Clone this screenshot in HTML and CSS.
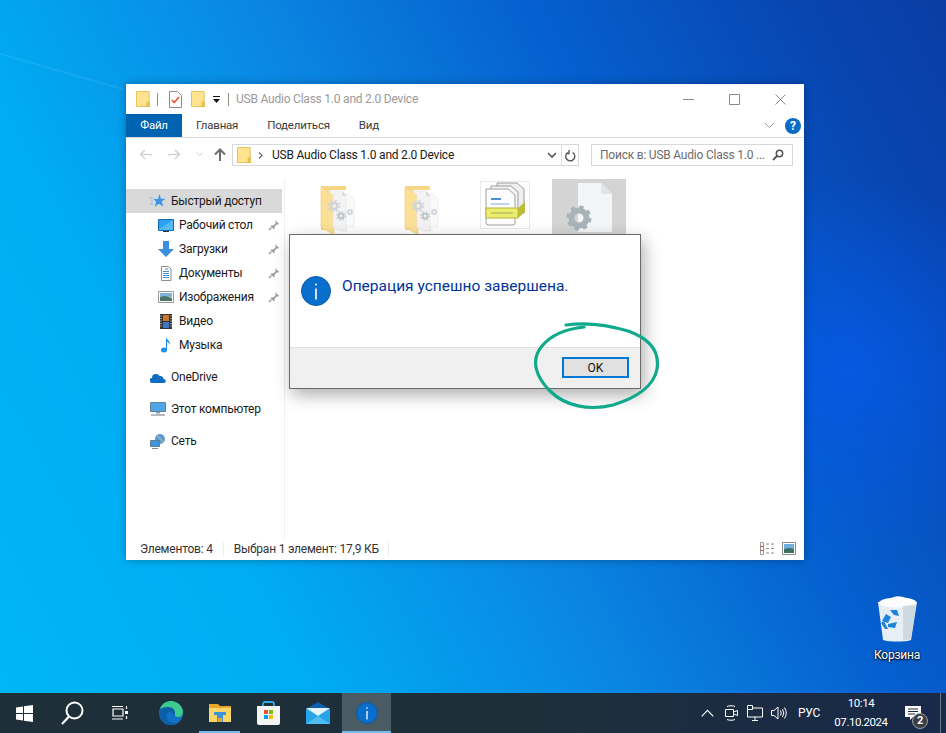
FILE: index.html
```html
<!DOCTYPE html>
<html lang="ru">
<head>
<meta charset="utf-8">
<title>USB Audio Class 1.0 and 2.0 Device</title>
<link rel="stylesheet" href="styles.css">
</head>
<body>
<svg class="defs" width="0" height="0">
  <symbol id="folder" viewBox="0 0 14 16">
    <path d="M.5.5h12.6v15H.5z" fill="#ffe38f" stroke="#e3c25f"/>
    <path d="M11 11h2.500v4.500H11z" fill="#f5c94e" stroke="#d9ad3b" stroke-width=".6"/>
  </symbol>
  <symbol id="pin" viewBox="0 0 12 12">
    <path d="M7 1l4 4-1 .6-1.200-.2L6.600 7.600l.2 1.800-1 .8-3-3 .8-1 1.800.2L7.600 4.200 7.400 2z" fill="#9a9a9a"/>
    <path d="M3.500 8.500L1 11" stroke="#9a9a9a" stroke-width="1.200"/>
  </symbol>
  <symbol id="folderdocs" viewBox="0 0 35 50">
    <path d="M1 0h25v4H10v40H1z" fill="#f6d685"/>
    <path d="M1 1l13 8v40L1 41z" fill="#fbdf95" stroke="#efcd74" stroke-width=".6"/>
    <path d="M8 5h14l5 5v35H19l-6-3.500V9z" fill="#f3f3f3" stroke="#e6e6e6" stroke-width=".6"/>
    <path d="M22 5l5 5h-5z" fill="#dcdcdc"/>
    <path d="M26 8h3l5 5v28h-8z" fill="#f9f9f9" stroke="#e6e6e6" stroke-width=".6"/>
    <circle cx="14" cy="20" r="3.300" fill="none" stroke="#cdd4da" stroke-width="2.600"/>
    <circle cx="14" cy="20" r="5.600" fill="none" stroke="#cdd4da" stroke-width="1.500" stroke-dasharray="2 2.400"/>
    <circle cx="21" cy="30" r="2.400" fill="none" stroke="#bcc5cc" stroke-width="2"/>
    <circle cx="21" cy="30" r="4.300" fill="none" stroke="#bcc5cc" stroke-width="1.200" stroke-dasharray="1.600 1.800"/>
    <circle cx="30" cy="26" r="2" fill="none" stroke="#d0d6db" stroke-width="1.800"/>
  </symbol>
</svg>

<div class="desktop">
  <main class="wallpaper">
    <div class="beam"></div>

    <section class="window">
      <header class="titlebar">
        <svg class="qat-icon" width="14" height="16"><use href="#folder"/></svg>
        <span class="qat-sep"></span>
        <svg class="qat-icon doc-icon" width="13" height="17" viewBox="0 0 13 17">
          <path d="M.5.5h8l4 4v12H.5z" fill="#fff" stroke="#8d8d8d"/>
          <path d="M3 9l2.200 2.600L10 6" fill="none" stroke="#e2572b" stroke-width="1.500"/>
        </svg>
        <svg class="qat-icon second-folder" width="14" height="16"><use href="#folder"/></svg>
        <svg class="qat-drop" width="9" height="9" viewBox="0 0 9 9">
          <path d="M1 1.500h7" stroke="#111" stroke-width="1"/>
          <path d="M1 4h7L4.500 8z" fill="#111"/>
        </svg>
        <span class="qat-sep title-sep"></span>
        <span class="title-text">USB Audio Class 1.0 and 2.0 Device</span>
        <div class="window-controls">
          <svg width="11" height="11" viewBox="0 0 11 11"><path d="M0 5.500h11" stroke="#8a8a8a"/></svg>
          <svg width="11" height="11" viewBox="0 0 11 11"><path d="M.5.5h10v10H.5z" fill="none" stroke="#8a8a8a"/></svg>
          <svg width="11" height="11" viewBox="0 0 11 11"><path d="M.5.500l10 10M10.500.500l-10 10" stroke="#8a8a8a"/></svg>
        </div>
      </header>

      <nav class="ribbon">
        <span class="tab tab-file">Файл</span>
        <span class="tab tab-home">Главная</span>
        <span class="tab tab-share">Поделиться</span>
        <span class="tab tab-view">Вид</span>
        <svg class="ribbon-chevron" width="11" height="7" viewBox="0 0 11 7"><path d="M1 1l4.500 4.500L10 1" fill="none" stroke="#9b9b9b"/></svg>
        <span class="help">?</span>
      </nav>

      <div class="address-row">
        <svg class="nav-arrow" width="13" height="11" viewBox="0 0 13 11"><path d="M6 1L1.500 5.500 6 10M1.500 5.500H13" fill="none" stroke="#d4d4d4" stroke-width="1.500"/></svg>
        <svg class="nav-arrow forward" width="13" height="11" viewBox="0 0 13 11"><path d="M7 1l4.500 4.500L7 10M11.500 5.500H0" fill="none" stroke="#d4d4d4" stroke-width="1.500"/></svg>
        <svg class="nav-arrow recent" width="7" height="5" viewBox="0 0 7 5"><path d="M.5.500l3 3 3-3" fill="none" stroke="#d4d4d4"/></svg>
        <svg class="nav-arrow up" width="12" height="13" viewBox="0 0 12 13"><path d="M1 6.500L6 1.500l5 5M6 1.500V13" fill="none" stroke="#6d6d6d" stroke-width="2"/></svg>
        <div class="address">
          <svg class="addr-folder" width="14" height="16"><use href="#folder"/></svg>
          <svg class="addr-chevron" width="5" height="7" viewBox="0 0 5 7"><path d="M1 .5l3 3-3 3" fill="none" stroke="#707070" stroke-width="1.300"/></svg>
          <span class="addr-text">USB Audio Class 1.0 and 2.0 Device</span>
          <svg class="addr-drop" width="10" height="7" viewBox="0 0 10 7"><path d="M1 1l4 4 4-4" fill="none" stroke="#555" stroke-width="1.600"/></svg>
          <span class="addr-refresh">
            <svg width="11" height="13" viewBox="0 0 11 13"><path d="M3 3.500a4.500 4.500 0 1 0 4.500 0M4 1v3.500H.8" fill="none" stroke="#555" stroke-width="1.400"/></svg>
          </span>
        </div>
        <div class="search">
          <span class="search-text">Поиск в: USB Audio Class 1.0 ...</span>
          <svg width="12" height="12" viewBox="0 0 12 12"><circle cx="7.500" cy="4.500" r="3.200" fill="none" stroke="#555" stroke-width="1.500"/><path d="M5 7l-4 4" stroke="#555" stroke-width="1.800"/></svg>
        </div>
      </div>

      <div class="content">
        <aside class="nav-pane">
          <div class="nav-item top selected">
            <svg class="nav-icon" width="16" height="14" viewBox="0 0 16 14"><path d="M9.500 0l1.500 4.700h4.500l-3.700 2.800 1.400 5L9 9.700l-4.200 3 1.400-5-2.700-2.800h4.500z" fill="#3d95e6"/><path d="M0 4h3M1 7h2M0 10h3" stroke="#7cbcee"/></svg>
            <span>Быстрый доступ</span>
          </div>
          <div class="nav-item">
            <svg class="nav-icon" width="16" height="13" viewBox="0 0 16 13"><path d="M.5.5h15v11H.5z" fill="#2c9fee" stroke="#0f6db8"/><path d="M1 10L15 1v10H1z" fill="#55b9f5"/><path d="M5 12.500h6" stroke="#333"/></svg>
            <span>Рабочий стол</span>
            <svg class="pin" width="12" height="12"><use href="#pin"/></svg>
          </div>
          <div class="nav-item">
            <svg class="nav-icon" width="16" height="16" viewBox="0 0 16 16"><path d="M5 0h6v8h5l-8 8-8-8h5z" fill="#3c8fdc"/></svg>
            <span>Загрузки</span>
            <svg class="pin" width="12" height="12"><use href="#pin"/></svg>
          </div>
          <div class="nav-item">
            <svg class="nav-icon" width="16" height="15" viewBox="0 0 16 15"><path d="M3.500.500h7l2.500 2.500v11.500H3.500z" fill="#fff" stroke="#8f8f8f"/><path d="M7 3h3M5 5.500h6M5 7.500h6M5 9.500h6M5 11.500h6" stroke="#3d8fd8"/></svg>
            <span>Документы</span>
            <svg class="pin" width="12" height="12"><use href="#pin"/></svg>
          </div>
          <div class="nav-item">
            <svg class="nav-icon" width="16" height="12" viewBox="0 0 16 12"><path d="M.5.500h15v11H.5z" fill="#fff" stroke="#9a9a9a"/><path d="M2 2h12v4H2z" fill="#7fb4d8"/><path d="M2 6l5-1 7 2v3H2z" fill="#4d7467"/></svg>
            <span>Изображения</span>
            <svg class="pin" width="12" height="12"><use href="#pin"/></svg>
          </div>
          <div class="nav-item">
            <svg class="nav-icon" width="16" height="15" viewBox="0 0 16 15"><path d="M2 0h12v15H2z" fill="#333"/><path d="M5 1h6v6H5z" fill="#c9792b"/><path d="M5 8h6v6H5z" fill="#3f79c4"/><path d="M3 1.500v12M13 1.500v12" stroke="#ddd" stroke-dasharray="1 1.500" stroke-width="1.200"/></svg>
            <span>Видео</span>
          </div>
          <div class="nav-item">
            <svg class="nav-icon" width="16" height="16" viewBox="0 0 16 16"><ellipse cx="6" cy="13" rx="3" ry="2.500" fill="#1d8fe8"/><path d="M8 13V0c.8 3 4.500 3.500 3.800 8-.6-2-2-3-2.800-3.200V13z" fill="#1d8fe8"/></svg>
            <span>Музыка</span>
          </div>
          <div class="nav-item top group">
            <svg class="nav-icon" width="16" height="11" viewBox="0 0 16 11"><path d="M2.500 11A2.500 2.500 0 0 1 2 6a4 4 0 0 1 7.500-2A3.500 3.500 0 0 1 13.500 7 2 2 0 0 1 14 11z" fill="#0f6cc4"/></svg>
            <span>OneDrive</span>
          </div>
          <div class="nav-item top group">
            <svg class="nav-icon" width="16" height="14" viewBox="0 0 16 14"><path d="M.5.500h15v9H.5z" fill="#4ea5e8" stroke="#6a7f90"/><path d="M6 10h4v1.500H6z" fill="#8a9aa6"/><path d="M1 13h14" stroke="#9aa6ae" stroke-width="1.500"/></svg>
            <span>Этот компьютер</span>
          </div>
          <div class="nav-item top group">
            <svg class="nav-icon" width="16" height="15" viewBox="0 0 16 15"><circle cx="10" cy="5" r="5" fill="#5d9bd6"/><path d="M7 2c2 2 4 3 6 6" stroke="#9fb6a4" stroke-width="1.500" fill="none"/><path d="M.5 6.500h9v6h-9z" fill="#3f94dd" stroke="#5f7d95"/><path d="M2 14.500h6" stroke="#7b8c98"/></svg>
            <span>Сеть</span>
          </div>
        </aside>

        <div class="files">
          <div class="file">
            <svg class="file-icon folder-icon" width="35" height="50"><use href="#folderdocs"/></svg>
            <span class="file-name">01</span>
          </div>
          <div class="file">
            <svg class="file-icon folder-icon" width="35" height="50"><use href="#folderdocs"/></svg>
            <span class="file-name">02</span>
          </div>
          <div class="file">
            <svg class="file-icon stack-icon" width="50" height="48" viewBox="0 0 50 48">
              <path d="M.5.500h49v47H.500z" fill="#fff" stroke="#e9e9e9"/>
              <path d="M17 2h20l7 6v24H17z" fill="#efefef" stroke="#9d9d9d"/>
              <path d="M11 5h20l7 6v24H11z" fill="#f5f5f5" stroke="#9d9d9d"/>
              <path d="M6 8h22l7 6v28a2 2 0 0 1-2 2H8a2 2 0 0 1-2-2z" fill="#fdfdfd" stroke="#a0a0a0"/>
              <path d="M11 18h10" stroke="#4c8fd6" stroke-width="2"/>
              <path d="M11 23h18" stroke="#a9c6e4" stroke-width="1.500"/>
              <path d="M6 27h32v10H6z" fill="#ecec6e" stroke="#b5b53c"/>
              <path d="M38 27l7-6v10l-7 6z" fill="#bcbc3c"/>
              <path d="M11 32h22" stroke="#b9c25a" stroke-width="1.500"/>
            </svg>
            <span class="file-name">1001</span>
          </div>
          <div class="file selected-file">
            <svg class="file-icon gear-icon" width="48" height="52" viewBox="0 0 48 52">
              <path d="M12 1h23l11 11v38H12z" fill="#f4f5f6"/>
              <path d="M35 1l11 11H35z" fill="#e3e4e5"/>
              <circle cx="13" cy="36" r="7.500" fill="none" stroke="#a9b3ba" stroke-width="6"/>
              <circle cx="13" cy="36" r="11" fill="none" stroke="#a9b3ba" stroke-width="3" stroke-dasharray="4.300 4.340"/>
            </svg>
            <span class="file-name">1002</span>
          </div>
        </div>
      </div>

      <footer class="statusbar">
        <span class="status-count">Элементов: 4</span>
        <span class="status-selected">Выбран 1 элемент: 17,9 КБ</span>
        <div class="view-buttons">
          <svg width="14" height="13" viewBox="0 0 14 13"><path d="M.5.500h3v12h-3z" fill="none" stroke="#999"/><path d="M.5 4.500h3M.5 8.500h3" stroke="#c0504d"/><path d="M6 2h3M11 2h3M6 6.500h3M11 6.500h3M6 11h3M11 11h3" stroke="#8a8a8a"/></svg>
          <svg width="14" height="13" viewBox="0 0 14 13"><path d="M.5.500h13v12H.500z" fill="#fff" stroke="#8a8a8a"/><path d="M2 2h10v5H2z" fill="#6bb0dc"/><path d="M2 7l5-1 5 1v4H2z" fill="#3f6d62"/></svg>
        </div>
      </footer>
    </section>

    <section class="dialog">
      <div class="dialog-body">
        <svg class="info-large" width="30" height="30" viewBox="0 0 30 30">
          <circle cx="15" cy="15" r="14.500" fill="#0a6fcc" stroke="#0b5aa8"/>
          <path d="M15 12.500v11" stroke="#fff" stroke-width="1.600"/>
          <circle cx="15" cy="8.500" r="1" fill="#fff"/>
        </svg>
        <p class="dialog-text">Операция успешно завершена.</p>
      </div>
      <div class="dialog-footer">
        <button class="ok" type="button">OK</button>
      </div>
    </section>

    <svg class="annotation" width="136" height="92" viewBox="0 0 136 92">
      <path d="M38 3C58 0 80 3 100 9c20 7 32 19 29 38-3 17-21 29-44 36-24 6-48 1-63-14C8 55 2 38 14 24 23 13 38 7 56 5" fill="none" stroke="#10a98b" stroke-width="3.200" stroke-linecap="round"/>
    </svg>

    <div class="recycle">
      <svg width="42" height="46" viewBox="0 0 42 46">
        <path d="M2 6l5 38c5 2 24 2 28 0l6-38z" fill="#e8eff4"/>
        <path d="M2 7C8 1 14 3 18 1c5-2 10 1 14 1 4 1 8 2 9 5-8 6-31 6-39 0z" fill="#fbfcfd"/>
        <path d="M27 10l13-1-5 34c-3 1-6 1-8 1z" fill="#c5d2dc" opacity=".75"/>
        <path d="M6 25l4-7 5 3-3 6zM14 14l7 0 2 6-5-1zM21 26l-2 6-7-1v-3zM5 27l4 6h3l-4-8z" fill="#1b84dc"/>
      </svg>
      <span class="recycle-label">Корзина</span>
    </div>
  </main>

  <footer class="taskbar">
    <div class="task-btn sys">
      <svg width="17" height="17" viewBox="0 0 17 17"><path d="M0 2.400l7-1V8H0zM8 1.200L17 0v8H8zM0 9h7v6.600l-7-1zM8 9h9v8l-9-1.200z" fill="#fff"/></svg>
    </div>
    <div class="task-btn sys">
      <svg width="23" height="24" viewBox="0 0 23 24"><circle cx="13.500" cy="9.500" r="8" fill="none" stroke="#fff" stroke-width="2"/><path d="M8 15.500L1 23" stroke="#fff" stroke-width="2.200"/></svg>
    </div>
    <div class="task-btn sys">
      <svg width="17" height="16" viewBox="0 0 17 16"><path d="M1 4h10v7H1zM0 1.500h11M0 14h11M14.500 1v3M14.500 11v3" fill="none" stroke="#fff" stroke-width="1.200"/><path d="M13 6h3v3h-3z" fill="#fff"/></svg>
    </div>
    <div class="apps">
      <div class="task-btn app">
        <svg width="24" height="24" viewBox="0 0 24 24">
          <circle cx="12" cy="12" r="12" fill="#0f72c4"/>
          <path d="M1 8C3 2 8 0 12 0c6 0 12 5 12 11 0 3-2 5-5 5-2 0-3-1-3-2 0-3-2-5-5-5C6 9 3 9 1 8z" fill="#3ccb8d"/>
          <path d="M1 8c3-2 9-3 12-1 3 1 3 4 3 7-2 0-3-3-5-3-3 0-4 3-3 6 1 4 6 6 9 4-3 3-8 3-11 2C2 20-1 13 1 8z" fill="#0c5ea6"/>
        </svg>
      </div>
      <div class="task-btn app">
        <svg width="22" height="18" viewBox="0 0 22 18">
          <path d="M0 0h9l2 2h11v16H0z" fill="#e8a92b"/>
          <path d="M0 4h22v14H0z" fill="#fad568"/>
          <path d="M5 8h12v3h-3v7H8v-7H5z" fill="#3c93d8"/>
          <path d="M9 14h4v4H9z" fill="#e6a825"/>
        </svg>
      </div>
      <div class="task-btn app">
        <svg width="23" height="24" viewBox="0 0 23 24">
          <path d="M6 6V3a2 2 0 0 1 2-2h7a2 2 0 0 1 2 2v3" fill="none" stroke="#2fa9e8" stroke-width="1.800"/>
          <path d="M0 5h23v17a2 2 0 0 1-2 2H2a2 2 0 0 1-2-2z" fill="#f4f4f4"/>
          <path d="M7 9h4v4H7z" fill="#e8532b"/><path d="M12 9h4v4h-4z" fill="#7fba00"/><path d="M7 14h4v4H7z" fill="#00a4ef"/><path d="M12 14h4v4h-4z" fill="#ffb900"/>
        </svg>
      </div>
      <div class="task-btn app">
        <svg width="24" height="22" viewBox="0 0 24 22">
          <path d="M0 7l12-7 12 7v3H0z" fill="#0f5fae"/>
          <path d="M0 7h24v15H0z" fill="#27a3ea"/>
          <path d="M0 6h24L12 14z" fill="#e6f4fc"/>
          <path d="M0 22l12-8 12 8z" fill="#4fbdf2"/>
        </svg>
      </div>
      <div class="task-btn app active">
        <svg width="22" height="22" viewBox="0 0 22 22">
          <circle cx="11" cy="11" r="10.500" fill="#0a6fcc" stroke="#0b5aa8"/>
          <path d="M11 9v8.500" stroke="#fff" stroke-width="1.300"/>
          <circle cx="11" cy="6" r=".8" fill="#fff"/>
        </svg>
      </div>
    </div>
    <div class="tray">
      <span class="tray-icon"><svg width="13" height="8" viewBox="0 0 13 8"><path d="M.7 7.300l5.800-6 5.800 6" fill="none" stroke="#fff" stroke-width="1.100"/></svg></span>
      <span class="tray-icon"><svg width="13" height="16" viewBox="0 0 13 16"><path d="M2 1.500c2-1 6-1 8 0M2 14.500c2 1 6 1 8 0" fill="none" stroke="#fff"/><path d="M.5 4.500h8v7h-8zM8.500 7l4-1.500v5l-4-1.500" fill="none" stroke="#fff"/></svg></span>
      <span class="tray-icon"><svg width="16" height="16" viewBox="0 0 16 16"><path d="M.5.500h5v4h-5zM5.500 3h10v9h-15V4.500M8 12v3M5 15.500h6" fill="none" stroke="#fff"/></svg></span>
      <span class="tray-icon"><svg width="16" height="14" viewBox="0 0 16 14"><path d="M.5 4.500h2.500L7 1v12L3 9.500H.5z" fill="none" stroke="#fff"/><path d="M9.500 4.500q1.500 2.500 0 5M11.500 3q2.500 4 0 8M13.500 1.500q3.500 5.500 0 11" fill="none" stroke="#fff"/></svg></span>
      <span class="lang">РУС</span>
      <div class="clock"><span>10:14</span><span>07.10.2024</span></div>
      <div class="action">
        <svg width="16" height="14" viewBox="0 0 16 14"><path d="M0 0h16v11H8l-3 3v-3H0z" fill="#fff"/><path d="M3 3h10M3 5.500h10M3 8h7" stroke="#1c2c3f"/></svg>
        <span class="action-badge">2</span>
      </div>
      <span class="show-desktop"></span>
    </div>
  </footer>
</div>
</body>
</html>
```
FILE: styles.css
```css
* { box-sizing: border-box; }
html, body { margin: 0; height: 100%; overflow: hidden; }
body { font-family: Roboto, "Open Sans", "Liberation Sans", sans-serif; font-size: 12px; letter-spacing: -.22px; color: #1a1a1a; }
.defs { position: absolute; }
.desktop { width: 946px; height: 733px; display: flex; flex-direction: column; }

.wallpaper {
  flex: 1;
  position: relative;
  overflow: hidden;
  background:
    radial-gradient(circle at 850px 370px, rgba(5, 90, 235, .75), rgba(5, 90, 235, 0) 190px),
    linear-gradient(62deg, #00b6f8 0%, #00acf3 24%, #0a86e2 47%, #0560cf 68%, #0846b2 88%, #0a3da4 100%);
}
.beam {
  position: absolute; left: -5px; top: 70px; width: 130px; height: 2px;
  background: rgba(255, 255, 255, .07);
  transform: rotate(16deg);
}

/* Explorer window */
.window {
  position: absolute; left: 126px; top: 84px; width: 678px; height: 476px;
  background: #fff;
  display: flex; flex-direction: column;
  box-shadow: 0 0 8px rgba(0, 0, 0, .3);
}
.titlebar { height: 30px; display: flex; align-items: center; padding-left: 10px; flex: none; }
.qat-sep { width: 1px; height: 13px; background: #8e8e8e; margin-left: 7px; }
.doc-icon { margin-left: 11px; }
.second-folder { margin-left: 9px; }
.qat-drop { margin-left: 7px; }
.title-sep { margin-left: 7px; }
.title-text { margin-left: 7px; color: #9a9a9a; }
.window-controls { margin-left: auto; display: flex; gap: 35px; padding-right: 18px; }

.ribbon { height: 24px; flex: none; display: flex; align-items: center; border-bottom: 1px solid #dadbdc; position: relative; }
.tab { line-height: 23px; height: 23px; color: #3b3b3b; font-size: 11.500px; }
.tab-file { width: 56px; background: #0063b1; color: #fff; text-align: center; }
.tab-home { margin-left: 14px; }
.tab-share { margin-left: 29px; }
.tab-view { margin-left: 29px; }
.ribbon-chevron { margin-left: auto; margin-right: 10px; }
.help {
  width: 16px; height: 16px; margin-right: 3px; border-radius: 50%;
  background: #0b6cc7; color: #fff; font-weight: 700; font-size: 12px; line-height: 16px; text-align: center;
}

.address-row { height: 41px; flex: none; display: flex; align-items: flex-start; padding-top: 6px; }
.nav-arrow { margin-top: 5px; flex: none; }
.address-row > .nav-arrow:first-child { margin-left: 13px; }
.forward { margin-left: 16px; }
.recent { margin-left: 15px; margin-top: 8px; }
.up { margin-left: 11px; margin-top: 4px; }
.address {
  margin-left: 6px; width: 347px; height: 22px; border: 1px solid #d9d9d9;
  display: flex; align-items: center; padding-left: 4px;
}
.addr-chevron { margin-left: 7px; }
.addr-text { margin-left: 9px; color: #1a1a1a; }
.addr-drop { margin-left: auto; margin-right: 4px; }
.addr-refresh { width: 17px; height: 20px; border-left: 1px solid #d9d9d9; display: flex; align-items: center; justify-content: center; }
.search {
  margin-left: 12px; width: 202px; height: 22px; border: 1px solid #d9d9d9;
  display: flex; align-items: center; justify-content: space-between; padding: 0 8px 0 8px;
}
.search-text { color: #6d6d6d; white-space: nowrap; }

.content { flex: 1; display: flex; min-height: 0; }
.nav-pane { width: 159px; flex: none; padding-top: 10px; border-right: 1px solid #f0f0f0; }
.nav-item { height: 24px; width: 156px; display: flex; align-items: center; padding-left: 32px; position: relative; white-space: nowrap; }
.nav-icon { flex: none; margin-right: 5px; }
.nav-item.top { padding-left: 24px; }
.nav-item.selected { background: #d9d9d9; }
.nav-item.group { margin-top: 8px; }
.pin { position: absolute; left: 142px; top: 6px; }

.files { flex: 1; display: flex; gap: 10px; padding-left: 15px; align-items: flex-start; }
.file { width: 74px; height: 79px; display: flex; flex-direction: column; align-items: center; }
.file-icon { flex: none; }
.folder-icon { margin-top: 7px; }
.stack-icon { margin-top: 2px; margin-bottom: 5px; }
.gear-icon { margin-top: 3px; margin-left: 2px; }
.selected-file { background: #d4d4d4; }
.file-name { line-height: 14px; margin-top: -2px; }

.statusbar { height: 22px; flex: none; display: flex; align-items: center; padding-left: 14px; padding-bottom: 1px; color: #333; }
.status-count { padding-right: 10px; border-right: 1px solid #ececec; }
.status-selected { margin-left: 10px; padding-right: 9px; border-right: 1px solid #ececec; }
.view-buttons { margin-left: auto; margin-right: 8px; display: flex; gap: 8px; }

/* Message dialog */
.dialog {
  position: absolute; left: 289px; top: 234px; width: 352px; height: 155px;
  background: #fff; border: 1px solid #6a6a6a;
  display: flex; flex-direction: column;
  box-shadow: 3px 6px 16px rgba(0, 0, 0, .32);
}
.dialog-body { height: 112px; flex: none; display: flex; align-items: flex-start; padding: 41px 0 0 11px; }
.dialog-text { margin: -1px 0 0 11px; font-size: 15.500px; letter-spacing: 0; line-height: 22px; color: #003399; white-space: nowrap; }
.dialog-footer { flex: 1; background: #f0f0f0; border-top: 1px solid #dfdfdf; display: flex; justify-content: flex-end; align-items: flex-start; padding: 9px 11px 0 0; }
.ok {
  width: 67px; height: 21px; padding: 0; background: #e1e1e1; border: 2px solid #0078d7;
  font: 12px Roboto, "Open Sans", sans-serif; color: #111;
}
.annotation { position: absolute; left: 528px; top: 322px; }

.recycle {
  position: absolute; left: 867px; top: 596px; width: 60px;
  display: flex; flex-direction: column; align-items: center; gap: 6px;
}
.recycle-label { color: #fff; line-height: 14px; text-shadow: 0 1px 2px #000, 0 0 2px #000; }

/* Taskbar */
.taskbar {
  height: 40px; flex: none; display: flex; align-items: center;
  background: linear-gradient(90deg, #1e2f39 0%, #1e2f3a 55%, #18294a 100%);
  color: #fff;
}
.task-btn { height: 40px; display: flex; align-items: center; justify-content: center; flex: none; position: relative; }
.sys { width: 48px; }
.apps { display: flex; margin-left: 2px; }
.app { width: 49px; }
.app:nth-child(2)::after, .active::after {
  content: ""; position: absolute; bottom: 0; height: 2px; background: #76b9ed;
}
.app:nth-child(2)::after { left: 4px; right: 4px; }
.active::after { left: 0; right: 0; }
.active { background: #4b5b63; }

.tray { margin-left: auto; display: flex; align-items: center; height: 40px; }
.tray-icon { width: 24px; display: flex; justify-content: center; }
.lang { width: 30px; margin-left: 3px; margin-right: 4px; text-align: center; font-size: 12px; }
.clock { width: 66px; display: flex; flex-direction: column; align-items: center; font-size: 11.500px; letter-spacing: -.45px; line-height: 19px; }
.action { width: 46px; padding-right: 8px; display: flex; justify-content: center; position: relative; }
.action-badge {
  position: absolute; left: 18px; top: 7px; width: 16px; height: 16px; border-radius: 50%;
  background: #3a3f45; border: 1px solid #9aa0a5; color: #fff; font-size: 11px; font-weight: 700; line-height: 14px; text-align: center;
}
.show-desktop { width: 6px; height: 40px; border-left: 1px solid #6a7784; }
```
